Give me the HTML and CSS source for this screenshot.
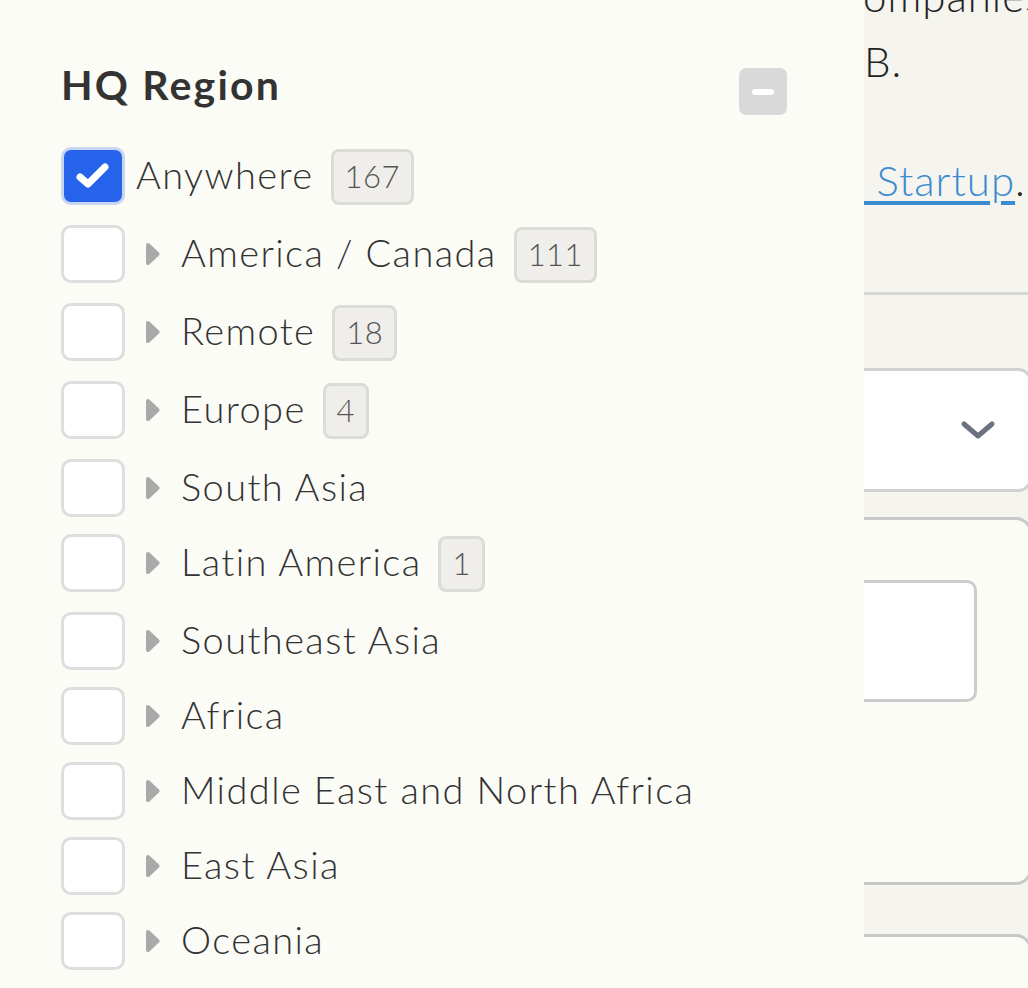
FILE: index.html
```html
<!DOCTYPE html>
<html lang="en">
  <head>
    <meta charset="UTF-8" />
    <meta name="viewport" content="width=device-width, initial-scale=1.0" />
    <title>Companies</title>

    <link rel="stylesheet" href="styles.css">
</head>
<body>
    <aside class="filters">
        <div class="filter-head">
            <h2>HQ Region</h2>
            <button class="collapse" aria-label="Collapse"><span></span></button>
        </div>
        <ul class="regions">
            <li class="region checked">
                <span class="box">
                    <svg width="36" height="28" viewBox="0 0 36 28"><path d="M5 15 L13 22 L30 5" fill="none" stroke="#fff" stroke-width="7" stroke-linecap="round" stroke-linejoin="round"/></svg>
                </span>
                <span class="name">Anywhere</span>
                <span class="count">167</span>
            </li>
            <li class="region">
                <span class="box"></span>
                <span class="caret"><svg width="15" height="24" viewBox="0 0 15 24"><path d="M3 3 L12.5 12 L3 21 Z" fill="#a9a9a9" stroke="#a9a9a9" stroke-width="4" stroke-linejoin="round"/></svg></span>
                <span class="name">America / Canada</span>
                <span class="count">111</span>
            </li>
            <li class="region">
                <span class="box"></span>
                <span class="caret"><svg width="15" height="24" viewBox="0 0 15 24"><path d="M3 3 L12.5 12 L3 21 Z" fill="#a9a9a9" stroke="#a9a9a9" stroke-width="4" stroke-linejoin="round"/></svg></span>
                <span class="name">Remote</span>
                <span class="count">18</span>
            </li>
            <li class="region">
                <span class="box"></span>
                <span class="caret"><svg width="15" height="24" viewBox="0 0 15 24"><path d="M3 3 L12.5 12 L3 21 Z" fill="#a9a9a9" stroke="#a9a9a9" stroke-width="4" stroke-linejoin="round"/></svg></span>
                <span class="name">Europe</span>
                <span class="count">4</span>
            </li>
            <li class="region">
                <span class="box"></span>
                <span class="caret"><svg width="15" height="24" viewBox="0 0 15 24"><path d="M3 3 L12.5 12 L3 21 Z" fill="#a9a9a9" stroke="#a9a9a9" stroke-width="4" stroke-linejoin="round"/></svg></span>
                <span class="name">South Asia</span>
            </li>
            <li class="region">
                <span class="box"></span>
                <span class="caret"><svg width="15" height="24" viewBox="0 0 15 24"><path d="M3 3 L12.5 12 L3 21 Z" fill="#a9a9a9" stroke="#a9a9a9" stroke-width="4" stroke-linejoin="round"/></svg></span>
                <span class="name">Latin America</span>
                <span class="count">1</span>
            </li>
            <li class="region">
                <span class="box"></span>
                <span class="caret"><svg width="15" height="24" viewBox="0 0 15 24"><path d="M3 3 L12.5 12 L3 21 Z" fill="#a9a9a9" stroke="#a9a9a9" stroke-width="4" stroke-linejoin="round"/></svg></span>
                <span class="name">Southeast Asia</span>
            </li>
            <li class="region">
                <span class="box"></span>
                <span class="caret"><svg width="15" height="24" viewBox="0 0 15 24"><path d="M3 3 L12.5 12 L3 21 Z" fill="#a9a9a9" stroke="#a9a9a9" stroke-width="4" stroke-linejoin="round"/></svg></span>
                <span class="name">Africa</span>
            </li>
            <li class="region">
                <span class="box"></span>
                <span class="caret"><svg width="15" height="24" viewBox="0 0 15 24"><path d="M3 3 L12.5 12 L3 21 Z" fill="#a9a9a9" stroke="#a9a9a9" stroke-width="4" stroke-linejoin="round"/></svg></span>
                <span class="name">Middle East and North Africa</span>
            </li>
            <li class="region">
                <span class="box"></span>
                <span class="caret"><svg width="15" height="24" viewBox="0 0 15 24"><path d="M3 3 L12.5 12 L3 21 Z" fill="#a9a9a9" stroke="#a9a9a9" stroke-width="4" stroke-linejoin="round"/></svg></span>
                <span class="name">East Asia</span>
            </li>
            <li class="region">
                <span class="box"></span>
                <span class="caret"><svg width="15" height="24" viewBox="0 0 15 24"><path d="M3 3 L12.5 12 L3 21 Z" fill="#a9a9a9" stroke="#a9a9a9" stroke-width="4" stroke-linejoin="round"/></svg></span>
                <span class="name">Oceania</span>
            </li>
        </ul>
    </aside>

    <main class="content">
        <p class="lead">Companies<br>B.</p>
        <p class="note"><a href="#">&nbsp;Startup</a>.</p>
        <div class="divider"></div>
        <div class="select">
            <svg width="36" height="20" viewBox="0 0 36 20"><path d="M4 4 L18 16 L32 4" fill="none" stroke="#6b7280" stroke-width="5" stroke-linecap="round" stroke-linejoin="round"/></svg>
        </div>
        <div class="card">
            <div class="field"></div>
        </div>
        <div class="card"></div>
    </main>
</body>
</html>
```

FILE: styles.css
```css
* {
    box-sizing: border-box;
}

body {
    margin: 0;
    height: 100vh;
    display: flex;
    overflow: hidden;
    font-family: Lato, "Noto Sans", sans-serif;
    background-color: #f5f4ef;
    color: #333;
}

/* filter drawer */
.filters {
    width: 864px;
    flex-shrink: 0;
    background-color: #fcfcf7;
    padding: 61px 77px 0 61px;
}

.filter-head {
    display: flex;
    justify-content: space-between;
    align-items: flex-start;
    margin-bottom: 32px;
}

.filter-head h2 {
    margin: 0;
    font-size: 41px;
    line-height: 48px;
    font-weight: 700;
    letter-spacing: 2.2px;
    color: #333;
}

.collapse {
    width: 48px;
    height: 47px;
    margin-top: 7px;
    padding: 0;
    border: none;
    border-radius: 7px;
    background-color: #d9d9d9;
    display: flex;
    align-items: center;
    justify-content: center;
    cursor: pointer;
}

.collapse span {
    width: 22px;
    height: 6px;
    border-radius: 3px;
    background-color: #fff;
}

.regions {
    list-style-type: none;
    margin: 0;
    padding: 0;
    display: flex;
    flex-direction: column;
    gap: 17px;
}

.region {
    display: flex;
    align-items: flex-start;
    font-size: 38px;
    font-weight: 300;
    line-height: 58px;
    letter-spacing: 1.4px;
    color: #333;
    white-space: nowrap;
}

.name {
    margin-top: -2px;
}

.box {
    width: 64px;
    height: 58px;
    flex-shrink: 0;
    margin-right: 20px;
    border: 3px solid #dedede;
    border-radius: 10px;
    background-color: #fff;
}

.region.checked .box {
    margin-right: 11px;
    background-color: #2563eb;
    border-color: #c7d4f2;
    display: flex;
    align-items: center;
    justify-content: center;
}

.caret {
    width: 15px;
    height: 58px;
    margin-right: 21px;
    display: flex;
    align-items: center;
}

.count {
    height: 56px;
    margin: 2px 0 3px 17px;
    padding: 0 11px;
    border: 3px solid #dcdcd7;
    border-radius: 8px;
    background-color: #efeeea;
    font-size: 31px;
    line-height: 49px;
    letter-spacing: 0.5px;
    color: #555;
}

/* page behind the drawer */
.content {
    flex: 1;
    min-width: 0;
    overflow: hidden;
    font-size: 42px;
    font-weight: 300;
    letter-spacing: 1px;
    color: #222;
}

.lead {
    margin: -36px 0 0;
    line-height: 65px;
    white-space: nowrap;
    text-indent: -30px;
}

.note {
    margin: 54px 0 0;
    line-height: 65px;
    white-space: nowrap;
}

.note a {
    color: #3a8bd0;
    text-decoration: underline;
    text-underline-offset: 5px;
}

.divider {
    margin-top: 79px;
    border-top: 3px solid #d8d8d4;
}

.select {
    height: 124px;
    margin: 73px -4px 0 0;
    padding-right: 33px;
    border: 3px solid #d2d2d2;
    border-left: none;
    border-radius: 0 14px 14px 0;
    background-color: #fff;
    display: flex;
    align-items: center;
    justify-content: flex-end;
}

.card {
    height: 368px;
    margin: 25px -4px 0 0;
    padding-top: 60px;
    border: 3px solid #c8c8c8;
    border-left: none;
    border-radius: 0 16px 16px 0;
    background-color: #fcfcf7;
}

.card + .card {
    margin-top: 49px;
}

.field {
    width: 133px;
    height: 122px;
    margin-left: -20px;
    border: 3px solid #ccc;
    border-radius: 10px;
    background-color: #fff;
}
```
